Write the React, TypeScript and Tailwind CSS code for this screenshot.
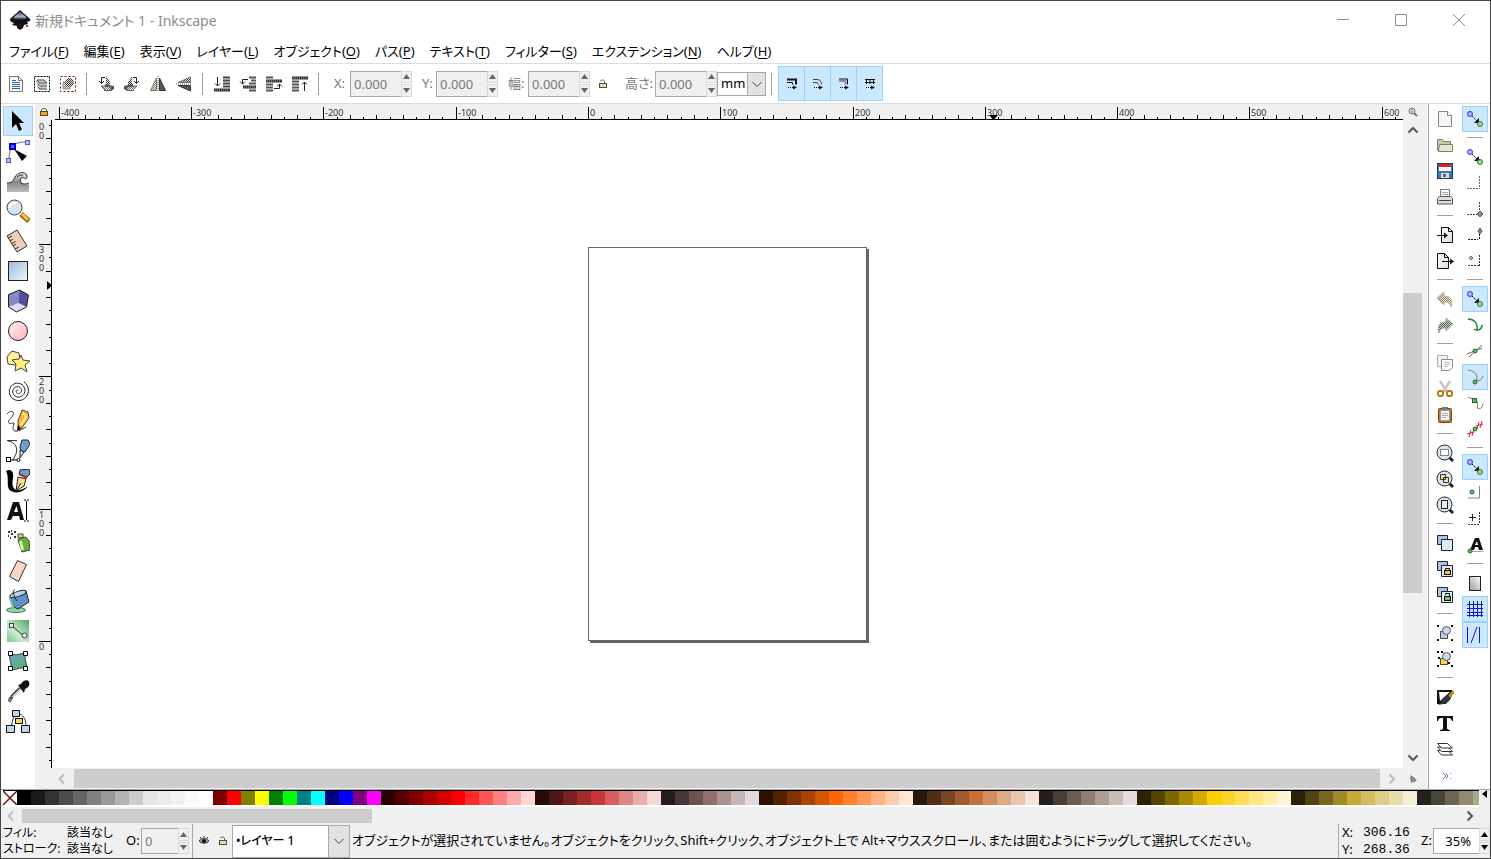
import React from "react";

const MENUS = [
  ["ファイル", "F"],
  ["編集", "E"],
  ["表示", "V"],
  ["レイヤー", "L"],
  ["オブジェクト", "O"],
  ["パス", "P"],
  ["テキスト", "T"],
  ["フィルター", "S"],
  ["エクステンション", "N"],
  ["ヘルプ", "H"],
];

const PALETTE = (
  "000000 1a1a1a 333333 4d4d4d 666666 808080 999999 b3b3b3 cccccc e6e6e6 ececec f2f2f2 f9f9f9 ffffff " +
  "800000 ff0000 808000 ffff00 008000 00ff00 008080 00ffff 000080 0000ff 800080 ff00ff " +
  "2b0000 550000 800000 aa0000 d40000 ff0000 ff2a2a ff5555 ff8080 ffaaaa ffd5d5 " +
  "280b0b 501616 782121 a02c2c c83737 d35f5f de8787 e9afaf f4d7d7 " +
  "241c1c 483737 6c5353 916f6f ac9393 c8b7b7 e3dbdb " +
  "2b1100 552200 803300 aa4400 d45500 ff6600 ff7f2a ff9955 ffb380 ffccaa ffe6d5 " +
  "28170b 502d16 784421 a05a2c c87137 d38d5f deaa87 e9c6af f4e3d7 " +
  "241f1c 483e37 6c5d53 917c6f ac9d93 c8beb7 e3dedb " +
  "2b2200 554400 806600 aa8800 d4aa00 ffcc00 ffd42a ffdd55 ffe680 ffeeaa fff6d5 " +
  "28220b 504416 786721 a0892c c8ab37 d3bc5f decd87 e9ddaf f4eed7 " +
  "24221c 484537 6c6753 918a6f aca793"
).split(" ");

type Item = { label: string; icon: React.ReactNode; on?: boolean } | null;

/* ---------- shared svg helpers ---------- */

function Svg({ size, children }: { size: number; children: React.ReactNode }) {
  return (
    <svg
      width={size}
      height={size}
      viewBox={`0 0 ${size} ${size}`}
      fill="none"
      className="block shrink-0"
      aria-hidden="true"
    >
      {children}
    </svg>
  );
}

function SharedDefs() {
  return (
    <svg width="0" height="0" className="absolute" aria-hidden="true">
      <defs>
        <pattern id="dither" width="2" height="2" patternUnits="userSpaceOnUse">
          <rect width="2" height="2" fill="#e8e8e8" />
          <rect width="1" height="1" fill="#333" />
          <rect x="1" y="1" width="1" height="1" fill="#333" />
        </pattern>
        <pattern id="ditherTan" width="2" height="2" patternUnits="userSpaceOnUse">
          <rect width="2" height="2" fill="#ece6d2" />
          <rect width="1" height="1" fill="#8a7f5c" />
          <rect x="1" y="1" width="1" height="1" fill="#8a7f5c" />
        </pattern>
        <pattern id="ditherGreen" width="2" height="2" patternUnits="userSpaceOnUse">
          <rect width="2" height="2" fill="#d8e0d6" />
          <rect width="1" height="1" fill="#43583f" />
          <rect x="1" y="1" width="1" height="1" fill="#43583f" />
        </pattern>
        <linearGradient id="blue" x1="0" y1="0" x2="1" y2="1">
          <stop offset="0" stopColor="#9db9d8" />
          <stop offset="1" stopColor="#f2f7fc" />
        </linearGradient>
        <linearGradient id="pink" x1="0" y1="0" x2="1" y2="1">
          <stop offset="0" stopColor="#fff0f1" />
          <stop offset="1" stopColor="#ffb3ba" />
        </linearGradient>
        <linearGradient id="grey" x1="0" y1="0" x2="0" y2="1">
          <stop offset="0" stopColor="#eee" />
          <stop offset="0.5" stopColor="#888" />
          <stop offset="1" stopColor="#bbb" />
        </linearGradient>
        <linearGradient id="paper" x1="0" y1="0" x2="1" y2="1">
          <stop offset="0" stopColor="#fff" />
          <stop offset="1" stopColor="#ddd" />
        </linearGradient>
        <linearGradient id="shade" x1="1" y1="0" x2="0" y2="1">
          <stop offset="0" stopColor="#fff" />
          <stop offset="1" stopColor="#999" />
        </linearGradient>
        <linearGradient id="green" x1="1" y1="0" x2="0" y2="1">
          <stop offset="0" stopColor="#4aa664" />
          <stop offset="0.6" stopColor="#cdebd2" />
          <stop offset="1" stopColor="#7cc48d" />
        </linearGradient>
        <linearGradient id="mesh" x1="0" y1="0" x2="1" y2="1">
          <stop offset="0" stopColor="#6d9fd0" />
          <stop offset="1" stopColor="#55b56a" />
        </linearGradient>
        <linearGradient id="inkTop" x1="0" y1="0" x2="0" y2="1">
          <stop offset="0" stopColor="#223" />
          <stop offset="0.6" stopColor="#a9bdd8" />
          <stop offset="1" stopColor="#111" />
        </linearGradient>
      </defs>
    </svg>
  );
}

// three turns of an Archimedean spiral around (12, 12)
const SPIRAL = Array.from({ length: 73 }, (_, i) => {
  const angle = (i / 24) * Math.PI * 2 + 1;
  const r = 0.5 + (i / 72) * 10.5;
  const x = 12 + r * Math.cos(angle);
  const y = 12 - r * Math.sin(angle);
  return `${i ? "L" : "M"}${x.toFixed(2)} ${y.toFixed(2)}`;
}).join("");

/* ---------- tool box icons, 24px ---------- */

const TOOLS: Item[] = [
  {
    label: "選択",
    on: true,
    icon: <path d="M6 2v17l4-4 3 7 3-1.500-3-6.500h5z" fill="#000" />,
  },
  {
    label: "ノード",
    icon: (
      <>
        <path d="M3 21C3 12 5 8 8 6c4-3 8-3 13-3" stroke="#666" />
        <rect x="19.500" y="1.500" width="4" height="4" fill="#b9b9ff" stroke="#5555dd" />
        <rect x="0.500" y="19.500" width="4" height="4" fill="#b9b9ff" stroke="#5555dd" />
        <rect x="4" y="5" width="5" height="5" fill="#4d6dff" stroke="#0000d0" strokeWidth="2" />
        <path d="M8 10l13 7-5 5z" fill="#000" />
      </>
    ),
  },
  {
    label: "微調整",
    icon: (
      <>
        <path d="M1 23V14c4 0 6-2 7-5s5-7 10-5c4 2 4 5 2 6-2-2-5-2-5 1s3 5 8 4v8z" fill="url(#grey)" />
        <path d="M1 14c5 0 6-2 8-6s8-6 11-3c2 3 1 5-1 5-1-2-5-2-5 1 0 4 4 5 9 3M11 8c2-2 4-2 6-2" stroke="#333" />
      </>
    ),
  },
  {
    label: "ズーム",
    icon: (
      <>
        <path d="M15 15l8 7" stroke="#8a5a08" strokeWidth="5" />
        <path d="M16 15l6 6" stroke="#ffc43c" strokeWidth="3" />
        <circle cx="8.500" cy="8.500" r="7.500" fill="#d5e4f1" stroke="#444" />
        <path d="M3 9c1-4 3-5 7-5" stroke="#fff" strokeWidth="2" />
      </>
    ),
  },
  {
    label: "計測",
    icon: (
      <>
        <path d="M1 7l10-6 10 16-10 6z" fill="#f3cdbb" stroke="#333" />
        <path d="M2 9l4-2M4 12l3-2M5.500 14.500l4-2M7 17l3-2M9 20l4-2" stroke="#333" />
      </>
    ),
  },
  {
    label: "矩形",
    icon: <rect x="2.500" y="2.500" width="19" height="19" fill="url(#blue)" stroke="#222" />,
  },
  {
    label: "3Dボックス",
    icon: (
      <>
        <path d="M2.500 5.500L13.500 1l9 5-2 12-10 5-8-5z" fill="#a6a6d4" />
        <path d="M2.500 5.500L13.500 1l-1 13-10 4z" fill="#8888c0" />
        <path d="M13.500 1l9 5-2 12-8-4z" fill="#4e4e9c" />
        <path d="M12.500 14l8 4-10 5-8-5z" fill="#dcdcf6" />
        <path d="M2.500 5.500L13.500 1l9 5-2 12-10 5-8-5z" stroke="#222" />
      </>
    ),
  },
  {
    label: "円",
    icon: <circle cx="12" cy="12" r="9.500" fill="url(#pink)" stroke="#222" />,
  },
  {
    label: "星形",
    icon: (
      <>
        <path d="M1 8l5-6 7 2 1 7-5 5-7-1z" fill="#fff2a0" stroke="#444" />
        <path d="M15 6l2 5 7 1-5 4 2 7-6-4-6 3 1-7-4-4 7-1z" fill="#ffee80" stroke="#444" />
      </>
    ),
  },
  {
    label: "らせん",
    icon: <path d={SPIRAL} stroke="#222" />,
  },
  {
    label: "鉛筆",
    icon: (
      <>
        <path d="M1 5c3-4 8-3 6 1S1 12 3 14s6-2 5 1-2 6 1 7 7-2 11-4" stroke="#333" />
        <path d="M16 1l6 2 1 6-8 11-3 1V12z" fill="#ffb52c" stroke="#444" />
        <path d="M17 4l3 4-5 8" stroke="#fff0a0" strokeWidth="2" />
        <path d="M12 16l3 3-4 3z" fill="#000" />
      </>
    ),
  },
  {
    label: "ペン",
    icon: (
      <>
        <path d="M1 1.500h10M2 2c8 1 10 8 8 13l-3 6" stroke="#333" />
        <path d="M16 1l6 0 2 4-5 8-4-1-1-4z" fill="#6fa1cf" stroke="#222" />
        <path d="M14 11l4 2-4 6z" fill="#ddd" stroke="#222" />
        <rect x="0.500" y="18.500" width="4" height="4" fill="#fff" stroke="#000" />
        <path d="M5 21h7" stroke="#000" />
        <circle cx="12.500" cy="21" r="1.500" fill="#fff" stroke="#000" />
      </>
    ),
  },
  {
    label: "カリグラフィ",
    icon: (
      <>
        <path d="M0 2c5-3 8 1 7 7s-1 10 3 12c3 1 8-1 12-4-4 6-12 8-17 5-6-4-1-13-5-20z" fill="#000" />
        <path d="M14 1l9-1 1 5-3 3-8-3z" fill="#6b9ccc" stroke="#222" />
        <path d="M13 5l8 4" stroke="#d02020" strokeWidth="2" />
        <path d="M12 8l8 2-2 7-8 5z" fill="#f5dd90" stroke="#222" />
        <path d="M10 22l5-8" stroke="#222" />
      </>
    ),
  },
  {
    label: "テキスト",
    icon: (
      <>
        <path d="M1 21L7 3h6l5 18h-4l-1-4H7l-2 4zM8 13h4L10.500 7z" fill="#111" fillRule="evenodd" />
        <path d="M18 1h2m1 0h2M20.500 2v19M18 22h2m1 0h2" stroke="#000" />
      </>
    ),
  },
  {
    label: "スプレー",
    icon: (
      <>
        <path d="M2 3h2m1-1h1m2 1h2M2 7h1m2-2h2m1 3h2M4 9h1" stroke="#333" strokeWidth="2" />
        <path d="M12 5h5v4h-5z" fill="#dcd088" stroke="#444" />
        <path d="M12 11l3-2 5-1 3 4 1 9-8 2z" fill="#65ae3e" stroke="#2c5a18" />
        <path d="M14.500 12l2 9" stroke="#d5f5a5" strokeWidth="3" />
      </>
    ),
  },
  {
    label: "消しゴム",
    icon: <path d="M11.500 1.500l9 4-8 17-9-5z" fill="#f8d5c6" stroke="#333" />,
  },
  {
    label: "バケツ",
    icon: (
      <>
        <ellipse cx="10" cy="21" rx="9.500" ry="2.500" fill="#8fd8a4" stroke="#3a7a4c" />
        <path d="M4 8L20 2l3 11-11 7c-4-1-7-6-8-12z" fill="#5c93c4" stroke="#222" />
        <path d="M4 9c0 4 4 7 3 12" stroke="#7fc895" strokeWidth="2" />
        <ellipse cx="12" cy="5" rx="8.500" ry="2.500" transform="rotate(-18 12 5)" fill="#b5d2ea" stroke="#222" />
        <path d="M11 12C7 6 6 1 9 1" stroke="#222" />
      </>
    ),
  },
  {
    label: "グラデーション",
    icon: (
      <>
        <rect x="1" y="1" width="22" height="22" fill="url(#green)" />
        <path d="M7 8l10 8" stroke="#333" />
        <rect x="3.500" y="4.500" width="4" height="4" fill="#eee" stroke="#444" />
        <circle cx="18.500" cy="16.500" r="2.500" fill="#eee" stroke="#444" />
      </>
    ),
  },
  {
    label: "メッシュ",
    icon: (
      <>
        <path d="M4 4c6 4 10 0 16 0-3 6 2 10 0 16-6-3-10 2-16 0 3-6-2-10 0-16z" fill="url(#mesh)" stroke="#444" />
        <path d="M2.500 2.500h4v4h-4zM17.500 2.500h4v4h-4zM2.500 17.500h4v4h-4zM17.500 17.500h4v4h-4z" fill="#fff" stroke="#000" />
      </>
    ),
  },
  {
    label: "スポイト",
    icon: (
      <>
        <path d="M14 9L6 17l-1 3" stroke="#555" strokeWidth="3" />
        <path d="M14 10l-8 8" stroke="#e3edf6" />
        <path d="M12 6l3-1c2-4 7-5 8-2s0 5-4 7l-1 4z" fill="#111" />
        <path d="M4 18c4 6-3 6-1 2z" fill="#6b98d0" stroke="#345" />
      </>
    ),
  },
  {
    label: "コネクター",
    icon: (
      <>
        <path d="M8 6l-3 12M14 5c4 2 6 6 6 12" stroke="#333" />
        <path d="M6.500 1.500h7v6h-7zM0.500 16.500h8v7h-8zM15.500 16.500h8v7h-8z" fill="#bcd4f0" stroke="#111" />
        <rect x="9.500" y="9.500" width="7" height="5" fill="#ffd24a" stroke="#111" />
      </>
    ),
  },
];

/* ---------- select-tool bar icons, 18px ---------- */

const BAR_ICONS: Item[] = [
  {
    label: "すべて選択",
    icon: (
      <>
        <path d="M2.500 1.500h9l4 4v11h-13z" fill="#fafafa" stroke="#777" />
        <path d="M11.500 1.500v4h4" stroke="#777" />
        <path d="M5 5.500h4M5 7.500h8M5 9.500h8M5 11.500h8M5 13.500h8" stroke="#2565a8" />
      </>
    ),
  },
  {
    label: "全レイヤーを選択",
    icon: (
      <>
        <rect x="1.500" y="1.500" width="15" height="15" stroke="#000" strokeDasharray="2 1" />
        <path d="M3 5l8-1 3 3v7l-9 1-1-4z" fill="#ccc" />
        <path d="M4 5h7l3 3H6zM5 9l2 2h7M5 12l2 2h7" stroke="#555" />
      </>
    ),
  },
  {
    label: "選択解除",
    icon: (
      <>
        <rect x="1.500" y="1.500" width="15" height="15" stroke="#701818" strokeDasharray="2 2" />
        <path d="M4 7h7v7H4z" fill="url(#ditherTan)" stroke="#999" />
        <circle cx="10.500" cy="7.500" r="4.500" fill="url(#dither)" />
      </>
    ),
  },
  null,
  {
    label: "反時計回りに回転",
    icon: (
      <>
        <path d="M9 1l4 6v3H9z" fill="url(#dither)" />
        <path d="M8 9l9 2v3l-3 2-7 0z" fill="#555" />
        <path d="M4 11l10 1v3l-5 1z" fill="url(#ditherTan)" stroke="#666" />
        <path d="M8 2.500H4.500V8M2 6l2.500 2.500L7 6" stroke="#222" />
      </>
    ),
  },
  {
    label: "時計回りに回転",
    icon: (
      <>
        <path d="M9 1L5 7v3h4z" fill="url(#dither)" />
        <path d="M10 9l-9 2v3l3 2h7z" fill="#555" />
        <path d="M14 11L4 12v3l5 1z" fill="url(#ditherTan)" stroke="#666" />
        <path d="M10 2.500h3.500V8M11 6l2.500 2.500L16 6" stroke="#222" />
      </>
    ),
  },
  {
    label: "水平に反転",
    icon: (
      <>
        <path d="M7.500 3v12.500h-6z" fill="url(#ditherTan)" stroke="#777" />
        <path d="M10.500 3v12.500h6z" fill="#555" stroke="#333" />
        <path d="M9 1v16" stroke="#555" strokeDasharray="1 1" />
      </>
    ),
  },
  {
    label: "垂直に反転",
    icon: (
      <>
        <path d="M3 7.500L15.500 2v5.500z" fill="url(#dither)" stroke="#777" />
        <path d="M3 10.500l12.500 5.500v-5.500z" fill="#555" stroke="#333" />
        <path d="M1 9h16" stroke="#555" strokeDasharray="1 1" />
      </>
    ),
  },
  null,
  {
    label: "最背面へ",
    icon: (
      <>
        <path d="M10 2.500h7M10 5.500h7M10 8.500h7M10 11.500h7" stroke="#444" strokeWidth="2" />
        <path d="M1 15h16" stroke="#333" strokeWidth="3" />
        <path d="M2 15h14" stroke="#aaa" strokeDasharray="1 1" />
        <path d="M4.500 2v9M2 8.500l2.500 2.500L7 8.500" stroke="#222" />
      </>
    ),
  },
  {
    label: "背面へ",
    icon: (
      <>
        <path d="M10 2.500h7M12 5.500h5M10 8.500h7M10 15.500h7" stroke="#555" strokeWidth="2" />
        <path d="M4 12h13" stroke="#333" strokeWidth="3" />
        <path d="M5 12h11" stroke="#aaa" strokeDasharray="1 1" />
        <path d="M9 4.500H3.500V9M1 6.500L3.500 9 6 6.500" stroke="#222" />
      </>
    ),
  },
  {
    label: "前面へ",
    icon: (
      <>
        <path d="M1 2.500h7M1 9.500h7M1 12.500h7M1 15.500h7" stroke="#555" strokeWidth="2" />
        <path d="M1 6h16" stroke="#333" strokeWidth="3" />
        <path d="M2 6h14" stroke="#aaa" strokeDasharray="1 1" />
        <path d="M9 13.500h5.500V9M12 11.500L14.500 9l2.500 2.500" stroke="#222" />
      </>
    ),
  },
  {
    label: "最前面へ",
    icon: (
      <>
        <path d="M1 3h16" stroke="#333" strokeWidth="3" />
        <path d="M2 3h14" stroke="#aaa" strokeDasharray="1 1" />
        <path d="M1 6.500h7M1 9.500h7M1 12.500h7M1 15.500h7" stroke="#555" strokeWidth="2" />
        <path d="M13.500 16V7M11 9.500L13.500 7 16 9.500" stroke="#222" />
      </>
    ),
  },
  null,
];

const AFFECT: { label: string; icon: React.ReactNode }[] = [
  {
    label: "線幅を拡大縮小",
    icon: (
      <>
        <path d="M4 4.500h9v5" stroke="#111" strokeWidth="2" />
        <path d="M4 7.500h5.500v2" stroke="#111" />
      </>
    ),
  },
  {
    label: "角丸を拡大縮小",
    icon: <path d="M4 4.500h4c3 0 4.500 2 4.500 5M4 7.500h3c2 0 2.500 1 2.500 2" stroke="#444" />,
  },
  {
    label: "グラデーションを変形",
    icon: (
      <>
        <path d="M4 4h8.500v5.500" stroke="#111" />
        <path d="M4 6h6.500v3.500" stroke="#8888b8" strokeWidth="2" />
      </>
    ),
  },
  {
    label: "パターンを変形",
    icon: <path d="M4 4.500h10M4 7.500h10M5.500 4v5M9 4v5M12.500 4v5" stroke="#111" />,
  },
];

/* ---------- command bar icons, 18px ---------- */

const lens = (
  <>
    <path d="M13 13l4 4" stroke="#222" strokeWidth="3" />
    <circle cx="8.500" cy="8.500" r="7.500" fill="#d6e6f4" stroke="#222" />
  </>
);

const clones = (
  <>
    <path d="M1.500 1.500h10v9h-10z" fill="#a9c4e0" stroke="#223" />
    <path d="M5.500 5.500h11v11h-11z" fill="#dce9f6" stroke="#223" />
  </>
);

const corners = (
  <path d="M1 1h2v2H1zM15 1h2v2h-2zM1 15h2v2H1zM15 15h2v2h-2z" fill="#111" />
);

const COMMANDS: Item[] = [
  {
    label: "新規",
    icon: (
      <>
        <path d="M2.500 1.500h9l4 4v11h-13z" fill="#f6f6f6" stroke="#888" />
        <path d="M11.500 1.500v4h4" fill="#fff" stroke="#888" />
      </>
    ),
  },
  {
    label: "開く",
    icon: (
      <>
        <path d="M1.500 14.500v-11h5l1 2h7v9z" fill="#c3cba8" stroke="#7c8468" />
        <path d="M2.500 15.500l1-7h13v7z" fill="#e3e8d2" stroke="#7c8468" />
      </>
    ),
  },
  {
    label: "保存",
    icon: (
      <>
        <rect x="1.500" y="1.500" width="15" height="15" fill="#3f77b8" stroke="#1d3c68" />
        <path d="M3 2h12v7H3z" fill="#fff" />
        <path d="M3 2h12v3H3z" fill="#e02020" />
        <path d="M5 11h8v5H5z" fill="#ddd" />
        <path d="M7 12h3v3H7z" fill="#666" />
      </>
    ),
  },
  {
    label: "印刷",
    icon: (
      <>
        <path d="M4.500 9V1.500h9V9" fill="#fff" stroke="#777" />
        <path d="M6 4.500h6M6 6.500h6" stroke="#aaa" />
        <path d="M1.500 10.500l2-2h11l2 2v5.500h-15z" fill="#ddd" stroke="#555" />
        <path d="M3 12.500h12" stroke="#444" />
      </>
    ),
  },
  null,
  {
    label: "インポート",
    icon: (
      <>
        <path d="M5.500 1.500h7l4 4v11h-11z" fill="url(#paper)" stroke="#111" />
        <path d="M12.500 1.500v4h4" stroke="#111" />
        <path d="M1 9.500h8" stroke="#111" />
        <path d="M8 6.500l4 3-4 3z" fill="#111" />
      </>
    ),
  },
  {
    label: "エクスポート",
    icon: (
      <>
        <path d="M1.500 1.500h7l4 4v11h-11z" fill="url(#paper)" stroke="#111" />
        <path d="M8.500 1.500v4h4" stroke="#111" />
        <path d="M6 9.500h9" stroke="#111" />
        <path d="M14 6.500l4 3-4 3z" fill="#111" />
      </>
    ),
  },
  null,
  {
    label: "元に戻す",
    icon: <path d="M1 8l7-6v4c6 0 9 3 7 11-1-4-3-5-7-5v3z" fill="url(#ditherTan)" stroke="#c0b89c" />,
  },
  {
    label: "やり直し",
    icon: <path d="M17 8l-7-6v4C4 6 1 9 3 17c1-4 3-5 7-5v3z" fill="url(#ditherGreen)" stroke="#9aaa96" />,
  },
  null,
  {
    label: "コピー",
    icon: (
      <>
        <path d="M1.500 1.500h10v11h-10z" fill="#f4f4f4" stroke="#aaa" />
        <path d="M5.500 5.500h11v8l-3 3h-8z" fill="#fafafa" stroke="#888" />
        <path d="M8 8.500h6M8 10.500h6M8 12.500h4" stroke="#bbb" />
      </>
    ),
  },
  {
    label: "切り取り",
    icon: (
      <>
        <path d="M4 1l7 11M14 1L7 12" stroke="#999" strokeWidth="2" />
        <path d="M4 1l7 11M14 1L7 12" stroke="#ddd" />
        <rect x="2" y="11" width="5" height="5" rx="2" stroke="#b87818" strokeWidth="2" />
        <rect x="11" y="11" width="5" height="5" rx="2" stroke="#b87818" strokeWidth="2" />
      </>
    ),
  },
  {
    label: "貼り付け",
    icon: (
      <>
        <rect x="2.500" y="2.500" width="13" height="14" rx="1" fill="#b87a28" stroke="#7a4a10" />
        <path d="M4.500 4.500h9v10h-9z" fill="#f5f5f5" stroke="#999" />
        <path d="M6 1h6v3H6z" fill="#777" />
        <path d="M6 7.500h6M6 9.500h6M6 11.500h4" stroke="#aaa" />
      </>
    ),
  },
  null,
  {
    label: "選択オブジェクトにズーム",
    icon: (
      <>
        {lens}
        <rect x="4.500" y="5.500" width="8" height="6" fill="#fff" stroke="#111" strokeDasharray="1 1" />
      </>
    ),
  },
  {
    label: "描画全体にズーム",
    icon: (
      <>
        {lens}
        <path d="M4.500 4.500h5v5h-5zM7.500 7.500h5v5h-5z" fill="#ffe08a" stroke="#333" />
      </>
    ),
  },
  {
    label: "ページにズーム",
    icon: (
      <>
        {lens}
        <rect x="5.500" y="4.500" width="6" height="8" fill="#eee" stroke="#222" />
      </>
    ),
  },
  null,
  { label: "複製", icon: clones },
  {
    label: "クローン作成",
    icon: (
      <>
        {clones}
        <path d="M9.500 11V8.500h4V11" stroke="#111" />
        <rect x="8.500" y="10.500" width="6" height="4" fill="#ffc030" stroke="#111" />
      </>
    ),
  },
  {
    label: "クローンのリンクを解除",
    icon: (
      <>
        {clones}
        <path d="M9.500 9V7.500h4V10" stroke="#111" />
        <rect x="8.500" y="10.500" width="6" height="4" fill="#70c050" stroke="#111" />
      </>
    ),
  },
  null,
  {
    label: "グループ化",
    icon: (
      <>
        {corners}
        <path d="M4.500 7.500h7v7h-7z" fill="#b8cce4" stroke="#445" />
        <circle cx="10.500" cy="6.500" r="4" fill="#c8d8ea" stroke="#556" />
      </>
    ),
  },
  {
    label: "グループ解除",
    icon: (
      <>
        {corners}
        <path d="M2 7h2v2H2zM12 12h2v2h-2zM5 1h2v2H5z" fill="#111" />
        <path d="M4.500 8.500h7v6h-7z" fill="#ffd24a" stroke="#443" />
        <circle cx="10.500" cy="6.500" r="4" fill="#c8d8ea" stroke="#556" />
      </>
    ),
  },
  null,
  {
    label: "フィル/ストローク",
    icon: (
      <>
        <rect x="1" y="2" width="15" height="14" fill="#111" />
        <path d="M3 4h11L4 13z" fill="#fff" />
        <path d="M10 16l6-8v8z" fill="#fff" />
        <path d="M18 3l-5 6" stroke="#c08a20" strokeWidth="3" />
        <path d="M11 7l4 3c-2 4-5 6-13 7 4-2 4-8 9-10z" fill="#333" />
      </>
    ),
  },
  {
    label: "テキストとフォント",
    icon: <path d="M1 2h16v5h-1c-1-3-2-3-5-3v10c0 1 1 2 3 2v1H4v-1c2 0 3-1 3-2V4C4 4 3 4 2 7H1z" fill="#111" />,
  },
  {
    label: "レイヤー",
    icon: (
      <>
        <path d="M1.500 10.500h10l5 4.500h-11z" fill="#fff" stroke="#333" />
        <path d="M1.500 7h10l5 4.500h-11z" fill="#fff" stroke="#333" />
        <path d="M1.500 3.500h10l5 4.500h-11z" fill="#fff" stroke="#333" />
      </>
    ),
  },
];

/* ---------- snap bar icons, 18px ---------- */

const snapLink = (
  <>
    <path d="M6 6l6 6" stroke="#111" strokeDasharray="2 1" />
    <path d="M13 8v5H8z" fill="#111" />
    <circle cx="4" cy="4" r="2.500" fill="#b4b4ff" stroke="#3333ee" />
    <circle cx="14" cy="14" r="2.500" fill="#a4d8a4" stroke="#287838" />
  </>
);

const greenDot = (x: number, y: number) => (
  <circle cx={x} cy={y} r="2" fill="#62b862" stroke="#1f6a2c" />
);

const SNAPS: Item[] = [
  { label: "スナップを有効化", on: true, icon: snapLink },
  null,
  { label: "境界枠", icon: snapLink },
  {
    label: "境界枠の辺",
    icon: <path d="M13.500 2v12M1 14.500h13" stroke="#5a7a5a" strokeDasharray="2 1" />,
  },
  {
    label: "境界枠の角",
    icon: (
      <>
        <path d="M13.500 2v10M1 14.500h10" stroke="#444" strokeDasharray="2 1" />
        <path d="M14 11l3 3-3 3-3-3z" fill="#7c987c" stroke="#555" />
      </>
    ),
  },
  {
    label: "辺の中点",
    icon: (
      <>
        <path d="M13.500 8v6M2 13.500h10" stroke="#111" strokeDasharray="2 1" />
        <path d="M14 2l2 3-2 3-2-3z" fill="#7c987c" stroke="#555" />
      </>
    ),
  },
  {
    label: "境界枠の中心",
    icon: (
      <>
        <path d="M13.500 3v11M2 13.500h11" stroke="#333" strokeDasharray="2 1" />
        <circle cx="5" cy="6" r="1.500" fill="#bce0bc" stroke="#476b47" />
      </>
    ),
  },
  null,
  { label: "ノードにスナップ", on: true, icon: snapLink },
  {
    label: "パス",
    icon: <path d="M2 3c6 0 10 4 9 11M8 13c4 3 8 0 8-4" stroke="#1f8a2c" strokeWidth="1.500" />,
  },
  {
    label: "パスの交差",
    icon: (
      <>
        <path d="M1 12l15-6M3 15L16 3" stroke="#666" />
        {greenDot(9, 9)}
      </>
    ),
  },
  {
    label: "シャープノード",
    on: true,
    icon: (
      <>
        <path d="M2 2c7 1 11 5 8 11M11 13c3 0 5-2 6-5" stroke="#777" />
        {greenDot(9, 14)}
      </>
    ),
  },
  {
    label: "スムーズノード",
    icon: (
      <>
        <path d="M2 3c3 2 6 2 8 3s2 6 1 8c4 2 5-1 6-4" stroke="#777" />
        <rect x="6.500" y="4.500" width="4" height="4" fill="#62b862" stroke="#1f6a2c" />
      </>
    ),
  },
  {
    label: "線の中点",
    icon: (
      <>
        <path d="M3 17l2-7M6 16l2-7M1 14l7-2M11 9l2-7M14 8l2-7M10 6l7-2" stroke="#c82828" />
        {greenDot(9, 9)}
      </>
    ),
  },
  null,
  { label: "その他の点", on: true, icon: snapLink },
  {
    label: "オブジェクトの中心",
    icon: (
      <>
        <path d="M13.500 2v12H2" stroke="#888" />
        {greenDot(6, 8)}
      </>
    ),
  },
  {
    label: "回転の中心",
    icon: (
      <>
        <path d="M13.500 2v12M2 14.500h11" stroke="#333" strokeDasharray="2 1" />
        <path d="M3 7.500h7M6.500 4v7" stroke="#222" />
      </>
    ),
  },
  {
    label: "テキストのベースライン",
    icon: (
      <>
        <path d="M4 14L9 2h4l4 12h-4l-1-3H9l-1 3zM9 9h3l-1-4z" fill="#111" fillRule="evenodd" />
        <path d="M4 15.500h13" stroke="#8ab890" />
        {greenDot(4, 15)}
      </>
    ),
  },
  null,
  {
    label: "ページ境界",
    icon: <rect x="3.500" y="2.500" width="11" height="14" fill="url(#shade)" stroke="#222" />,
  },
  {
    label: "グリッド",
    on: true,
    icon: (
      <path d="M1 4.500h16M1 8.500h16M1 12.500h16M1 15.500h16M3.500 1v16M7.500 1v16M11.500 1v16M15.500 1v16" stroke="#1414e0" />
    ),
  },
  {
    label: "ガイド",
    on: true,
    icon: <path d="M1.500 1v16M13.500 1v16M11 1L5 17" stroke="#1414e0" />,
  },
];

/* ---------- small controls ---------- */

function Lock({ open }: { open?: boolean }) {
  return (
    <Svg size={10}>
      <path d={open ? "M6.500 4.500V2.500c0-2-4-2-4 0" : "M2.500 5V3c0-2 5-2 5 0v2"} stroke="#555" />
      <rect x="1.500" y="4.500" width="7" height="4" fill={open ? "#e4dcae" : "#eaa820"} stroke="#554c30" />
    </Svg>
  );
}

function Chevron({ d, color = "#555" }: { d: string; color?: string }) {
  return (
    <Svg size={12}>
      <path d={d} stroke={color} strokeWidth="2" />
    </Svg>
  );
}

function Spin({
  id,
  value,
  width,
  live,
}: {
  id: string;
  value: string;
  width: string;
  live?: boolean;
}) {
  const arrow = live ? "#000" : "#666";
  return (
    <span className="flex h-[26px] shrink-0">
      <input
        id={id}
        defaultValue={value}
        disabled={!live}
        className={`${width} h-full border border-r-0 border-[#a8a8ac] pl-[3px] text-[13px] outline-none ${
          live ? "bg-white pr-2 text-right text-black" : "bg-[#f0f0f0] text-[#787878]"
        }`}
      />
      <span className="flex w-[11px] flex-col gap-px">
        <button
          aria-label="増やす"
          className="flex flex-1 items-center justify-center border border-[#d8d8d8] bg-[#f0f0f0]"
        >
          <svg width="7" height="5" viewBox="0 0 7 5" className="shrink-0">
            <path d="M0 5L3.500 0 7 5z" fill={arrow} />
          </svg>
        </button>
        <button
          aria-label="減らす"
          className="flex flex-1 items-center justify-center border border-[#d8d8d8] bg-[#f0f0f0]"
        >
          <svg width="7" height="5" viewBox="0 0 7 5" className="shrink-0">
            <path d="M0 0L3.500 5 7 0z" fill={arrow} />
          </svg>
        </button>
      </span>
    </span>
  );
}

function IconColumn({ items }: { items: Item[] }) {
  return (
    <div className="flex w-[30px] flex-col items-center pt-[2px]">
      {items.map((item, i) =>
        item ? (
          <button
            key={i}
            aria-label={item.label}
            aria-pressed={item.on}
            className={`flex h-[26px] w-[26px] items-center justify-center border ${
              item.on ? "border-[#99d1ff] bg-[#cce8ff]" : "border-transparent"
            }`}
          >
            <Svg size={18}>{item.icon}</Svg>
          </button>
        ) : (
          <div key={i} className="h-3 pt-[5px]">
            <div className="h-px w-4 bg-[#a0a0a0]" />
          </div>
        ),
      )}
      {items === COMMANDS && (
        <button aria-label="さらに表示" className="flex h-[26px] w-[26px] items-center justify-center pt-px pl-1">
          <Svg size={10}>
            <path d="M1 2l3 3-3 3M4 2l2 3-2 3M8.500 2v1M8.500 7v1" stroke="#7878b8" />
          </Svg>
        </button>
      )}
    </div>
  );
}

/* ---------- rulers ---------- */

const STEP = 13.229; // pixels for 10 mm at 35%

function tickRange(from: number, to: number) {
  return Array.from({ length: to - from + 1 }, (_, i) => from + i);
}

function HorizontalRuler() {
  const zero = 536;
  return (
    <svg width="100%" height="16" className="block font-['Noto_Sans',sans-serif]">
      <rect x="3" y="15" width="100%" height="1" fill="#000" />
      {tickRange(-40, 61).map((n) => {
        const x = Math.round(zero + n * STEP);
        const len = n % 10 === 0 ? 13 : n % 2 === 0 ? 5 : 3;
        return (
          <g key={n}>
            <rect x={x} y={16 - len} width="1" height={len} fill="#000" />
            {n % 10 === 0 && (
              <text x={x + 2} y="12" fontSize="9" fill="#333">
                {n * 10}
              </text>
            )}
          </g>
        );
      })}
      <path d="M937 11h9l-4.500 5z" fill="#000" />
    </svg>
  );
}

function VerticalRuler() {
  const zero = 521;
  return (
    <svg width="17" className="block h-auto font-['Noto_Sans',sans-serif]">
      <rect x="16" y="0" width="1" height="100%" fill="#000" />
      {tickRange(-9, 40).map((n) => {
        const y = Math.round(zero - n * STEP);
        const len = n % 10 === 0 ? 13 : n % 2 === 0 ? 6 : 3;
        return (
          <g key={n}>
            <rect x={17 - len} y={y} width={len} height="1" fill="#000" />
            {n % 10 === 0 &&
              String(n * 10)
                .split("")
                .map((digit, i) => {
                  const base = y + 9 + i * 9;
                  return base > 8 ? (
                    <text key={i} x="4" y={base} fontSize="9" fill="#333">
                      {digit}
                    </text>
                  ) : null;
                })}
          </g>
        );
      })}
      <path d="M12 161v9l5-4.500z" fill="#000" />
    </svg>
  );
}

/* ---------- page ---------- */

function TitleBar() {
  return (
    <header className="flex h-[38px] items-center pl-2 pr-[2px] text-[14px] text-[#8c8c8c]">
      <Svg size={22}>
        <path d="M11 1l9 8c2 2 2 3-2 4l1 2-4 1-1 3-3 2-3-2v-2l-5-1 2-2c-4-1-5-3-3-5z" fill="#111" />
        <path d="M11 2l7 7-4 2-3-1-3 1-4-2z" fill="url(#inkTop)" />
        <circle cx="18" cy="17" r="1" fill="#222" />
      </Svg>
      <h1 className="ml-1 flex-1">新規ドキュメント 1 - Inkscape</h1>
      <div className="flex">
        {["M3 8.500h12", "M3.500 3.500h11v11h-11z", "M3 3l12 12M15 3L3 15"].map((d, i) => (
          <button
            key={d}
            aria-label={["最小化", "最大化", "閉じる"][i]}
            className="flex w-[58px] items-center justify-center"
          >
            <Svg size={18}>
              <path d={d} stroke="#8c8c8c" />
            </Svg>
          </button>
        ))}
      </div>
    </header>
  );
}

function ToolControls() {
  return (
    <div className="flex h-[41px] items-center border-y border-[#dcdcdc] pl-[2px] text-[13px] text-[#787878]">
      {BAR_ICONS.map((item, i) =>
        item ? (
          <button key={i} aria-label={item.label} className="flex h-[26px] w-[26px] items-center justify-center">
            <Svg size={18}>{item.icon}</Svg>
          </button>
        ) : (
          <div key={i} className="flex w-3 pl-[5px]">
            <div className="h-[22px] w-px bg-[#a0a0a0]" />
          </div>
        ),
      )}
      <div className="ml-[9px] flex items-center gap-[10px]">
        <div className="flex items-center">
          <label htmlFor="pos-x" className="w-4">X:</label>
          <Spin id="pos-x" value="0.000" width="w-[51px]" />
        </div>
        <div className="flex items-center">
          <label htmlFor="pos-y" className="w-[14px]">Y:</label>
          <Spin id="pos-y" value="0.000" width="w-[51px]" />
        </div>
        <div className="flex items-center">
          <label htmlFor="size-w" className="w-5">幅:</label>
          <Spin id="size-w" value="0.000" width="w-[51px]" />
        </div>
      </div>
      <button aria-label="縦横比を固定" className="flex w-[26px] justify-center">
        <Lock open />
      </button>
      <label htmlFor="size-h" className="ml-[9px] w-[30px]">高さ:</label>
      <Spin id="size-h" value="0.000" width="w-[51px]" />
      <span className="relative flex h-6 w-[49px]">
        <select
          aria-label="単位"
          className="w-full appearance-none border border-[#a8a8ac] bg-white pl-[3px] text-[13px] text-black outline-none"
        >
          <option>mm</option>
        </select>
        <span className="pointer-events-none absolute inset-y-0 right-0 flex w-[19px] items-center justify-center border border-[#a8a8ac] bg-[#e2e2e2]">
          <Svg size={12}>
            <path d="M1.500 4L6 8.500 10.500 4" stroke="#444" />
          </Svg>
        </span>
      </span>
      <div className="mx-[5px] h-[22px] w-px bg-[#a0a0a0]" />
      <div className="ml-px flex">
        {AFFECT.map((item) => (
          <button
            key={item.label}
            aria-label={item.label}
            aria-pressed="true"
            className="-mr-px flex h-[35px] w-[27px] items-center justify-center border border-[#99d1ff] bg-[#cce8ff]"
          >
            <Svg size={18}>
              {item.icon}
              <path d="M5 12.500h1m1 0h1m1 0h1" stroke="#111" />
              <path d="M10 10.500l4 2-4 2z" fill="#111" />
            </Svg>
          </button>
        ))}
      </div>
    </div>
  );
}

function Desktop() {
  return (
    <div className="grid min-w-0 flex-1 grid-cols-[17px_minmax(0,1fr)_25px] grid-rows-[16px_minmax(0,1fr)_21px] bg-[#f0f0f0]">
      <button aria-label="ガイドをロック" className="flex items-center justify-center">
        <Lock />
      </button>
      <HorizontalRuler />
      <button aria-label="ズーム固定" className="flex w-[19px] items-center justify-center">
        <Svg size={10}>
          <circle cx="4" cy="4" r="3" fill="#ddd" stroke="#777" />
          <path d="M6 6l3 3" stroke="#777" strokeWidth="2" />
          <path d="M4 2v4" stroke="#777" />
        </Svg>
      </button>

      <div className="flex">
        <VerticalRuler />
      </div>
      <div className="flex items-center justify-center bg-white">
        <div className="h-[394px] w-[279px] border border-[#666] bg-white shadow-[2px_2px_0_0_#666]" />
      </div>
      <div className="flex w-[19px] flex-col items-center py-1">
        <Chevron d="M1.500 8.500L6 4l4.500 4.500" />
        <div className="h-[157px]" />
        <div className="h-[300px] w-full bg-[#cdcdcd]" />
        <div className="flex-1" />
        <Chevron d="M1.500 3.500L6 8l4.500-4.500" />
      </div>

      <div />
      <div className="flex items-center gap-[6px] pl-1 pr-[5px]">
        <Chevron d="M8 1.500L3.500 6 8 10.500" color="#bbb" />
        <div className="h-[19px] flex-1 bg-[#cdcdcd]" />
        <Chevron d="M3.500 1.500L8 6l-4.500 4.500" color="#bbb" />
      </div>
      <button aria-label="カラーマネジメント表示" className="flex w-[19px] items-center justify-center">
        <Svg size={10}>
          <path d="M2 1l7 5-6 3z" fill="#999" />
          <path d="M3 2l4 3" stroke="#a04060" />
          <path d="M3 4l1 4" stroke="#309050" />
          <path d="M5 8l3-2" stroke="#4060a0" />
        </Svg>
      </button>
    </div>
  );
}

function Palette() {
  return (
    <div className="border-t border-[#a8a8a8] bg-[#f0f0f0]">
      <div className="flex pl-[2px]">
        <div className="flex min-w-0 flex-1 overflow-hidden border-t border-black bg-white pb-[2px]">
          <button aria-label="なし" className="h-[14px] w-[14px] shrink-0">
            <Svg size={14}>
              <path d="M0 0l14 14M14 0L0 14" stroke="#701010" strokeWidth="1.500" />
            </Svg>
          </button>
          {PALETTE.map((hex, i) => (
            <button
              key={i}
              aria-label={"#" + hex}
              className="h-[14px] w-[14px] shrink-0"
              style={{ backgroundColor: "#" + hex }}
            />
          ))}
        </div>
        <button aria-label="パレットメニュー" className="flex h-2 w-[11px] items-center justify-center">
          <svg width="5" height="8" viewBox="0 0 5 8" className="shrink-0">
            <path d="M5 0v8L0 4z" fill="#000" />
          </svg>
        </button>
      </div>
      <div className="flex h-[17px] items-center pl-1 pr-[14px]">
        <Chevron d="M8 1.500L3.500 6 8 10.500" color="#bbb" />
        <div className="ml-[5px] h-[14px] w-[350px] bg-[#cdcdcd]" />
        <div className="flex-1" />
        <Chevron d="M3.500 1.500L8 6l-4.500 4.500" />
      </div>
    </div>
  );
}

function StatusBar() {
  return (
    <footer className="flex h-[34px] items-center bg-[#f0f0f0] text-[13px] text-black">
      <dl className="grid grid-cols-[64px_59px] pl-[2px] text-[12px] leading-4">
        <dt>フィル:</dt>
        <dd>該当なし</dd>
        <dt>ストローク:</dt>
        <dd>該当なし</dd>
      </dl>
      <label htmlFor="opacity" className="w-[15px]">O:</label>
      <Spin id="opacity" value="0" width="w-[37px]" />
      <div className="ml-[3px] h-[34px] w-px bg-[#a8a8a8]" />
      <button aria-label="レイヤー表示" className="ml-[5px] flex w-[12px] justify-center">
        <Svg size={10}>
          <path d="M0 5c2-4 8-4 10 0-2 3-8 3-10 0z" fill="#999" stroke="#444" />
          <circle cx="5" cy="5" r="2" fill="#111" />
          <path d="M2 2L1 1m4 0V0m3 2l1-1" stroke="#444" />
        </Svg>
      </button>
      <button aria-label="レイヤーロック" className="ml-[7px] flex w-[12px] justify-center">
        <Lock open />
      </button>
      <span className="relative ml-[3px] flex h-[33px] w-[118px] shrink-0">
        <select
          aria-label="レイヤー"
          className="w-full appearance-none border border-[#a8a8ac] bg-white pl-[3px] text-[12px] font-medium text-black outline-none"
        >
          <option>•レイヤー 1</option>
        </select>
        <span className="pointer-events-none absolute inset-y-0 right-0 flex w-[22px] items-center justify-center border border-[#a8a8ac] bg-[#e2e2e2]">
          <Svg size={12}>
            <path d="M1.500 4L6 8.500 10.500 4" stroke="#444" />
          </Svg>
        </span>
      </span>
      <p className="ml-[2px] min-w-0 flex-1 overflow-hidden whitespace-nowrap">
        オブジェクトが選択されていません。オブジェクトをクリック、Shift+クリック、オブジェクト上で
        Alt+マウススクロール、または囲むようにドラッグして選択してください。
      </p>
      <div className="h-[34px] w-px bg-[#a8a8a8]" />
      <dl className="grid grid-cols-[21px_58px] pl-[3px] leading-[17px]">
        <dt>X:</dt>
        <dd className="font-['Liberation_Mono',monospace]">306.16</dd>
        <dt>Y:</dt>
        <dd className="font-['Liberation_Mono',monospace]">268.36</dd>
      </dl>
      <label htmlFor="zoom" className="w-[12px]">Z:</label>
      <Spin id="zoom" value="35%" width="w-[46px]" live />
    </footer>
  );
}

export default function App() {
  return (
    <div className="flex min-h-screen flex-col border border-[#454545] bg-white font-['Noto_Sans','Noto_Sans_CJK_JP',sans-serif] [font-feature-settings:'palt']">
      <SharedDefs />
      <TitleBar />
      <nav className="flex h-6 items-center gap-[15px] pl-2 pt-[2px] text-[13px] text-black">
        {MENUS.map(([name, key]) => (
          <button key={key} className="whitespace-nowrap">
            {name}(<u className="underline-offset-2">{key}</u>)
          </button>
        ))}
      </nav>
      <ToolControls />
      <main className="flex flex-1">
        <div className="flex w-[34px] flex-col items-center pt-[2px]">
          {TOOLS.map(
            (tool) =>
              tool && (
                <button
                  key={tool.label}
                  aria-label={tool.label}
                  aria-pressed={!!tool.on}
                  className={`flex h-[30px] w-[30px] items-center justify-center border ${
                    tool.on ? "border-[#99d1ff] bg-[#cce8ff]" : "border-transparent"
                  }`}
                >
                  <Svg size={24}>{tool.icon}</Svg>
                </button>
              ),
          )}
        </div>
        <Desktop />
        <aside className="flex border-l border-[#a8a8a8] pl-px">
          <IconColumn items={COMMANDS} />
          <IconColumn items={SNAPS} />
        </aside>
      </main>
      <Palette />
      <StatusBar />
    </div>
  );
}
